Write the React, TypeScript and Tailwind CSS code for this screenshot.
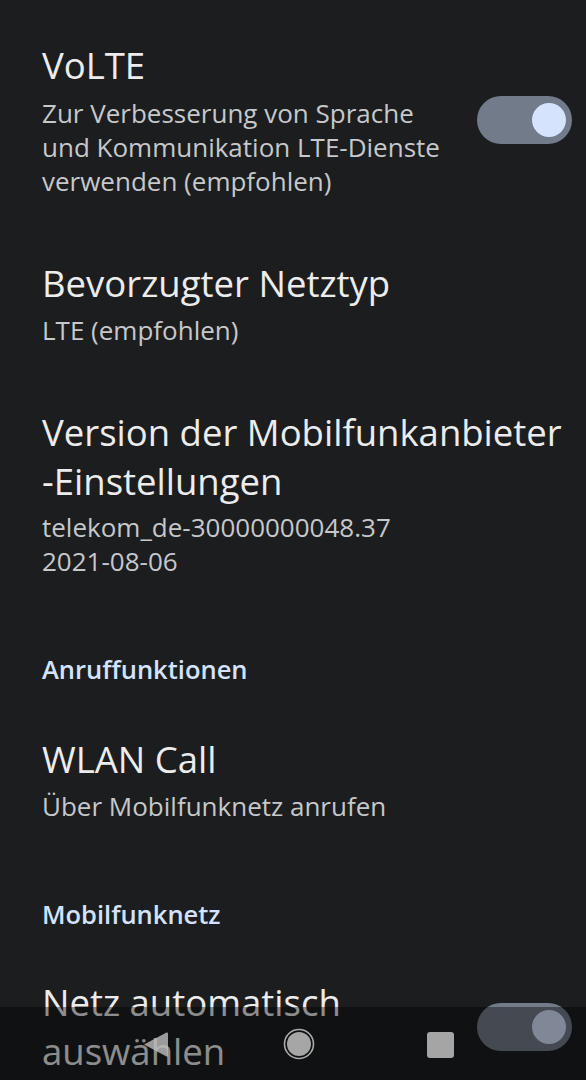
import React from 'react'

const Toggle: React.FC = () => (
  <div className="w-[95px] h-[48px] rounded-full bg-[#727b89] flex items-center justify-end pr-[6px] shrink-0">
    <div className="w-[34px] h-[34px] rounded-full bg-[#d6e3fc]" />
  </div>
)

const Title: React.FC<{ children: React.ReactNode }> = ({ children }) => (
  <div className="text-[36.5px] leading-[49px] text-[#ececec]">{children}</div>
)

const Sub: React.FC<{ children: React.ReactNode; className?: string }> = ({ children, className }) => (
  <div className={`text-[26px] leading-[34px] text-[#c6c8ca] ${className ?? ''}`}>{children}</div>
)

const Category: React.FC<{ children: React.ReactNode; className?: string }> = ({ children, className }) => (
  <div className={`text-[25.5px] leading-[34px] font-semibold text-[#d3e3fd] ${className ?? ''}`}>{children}</div>
)

export default function App() {
  return (
    <div
      className="relative h-[1080px] w-[586px] overflow-hidden bg-[#1c1d1f]"
      style={{ fontFamily: '"Open Sans", Roboto, sans-serif' }}
    >
      <div className="flex flex-col pl-[42px] pr-[14px] pt-[41px]">
        {/* VoLTE */}
        <div className="flex items-center gap-3">
          <div className="flex-1">
            <Title>VoLTE</Title>
            <Sub className="mt-[6px]">
              <div>Zur Verbesserung von Sprache</div>
              <div>und Kommunikation LTE-Dienste</div>
              <div>verwenden (empfohlen)</div>
            </Sub>
          </div>
          <Toggle />
        </div>

        {/* Netztyp */}
        <div className="mt-[61px]">
          <Title>Bevorzugter Netztyp</Title>
          <Sub className="mt-[5px]">LTE (empfohlen)</Sub>
        </div>

        {/* carrier config version */}
        <div className="mt-[61px]">
          <Title>
            <div>Version der Mobilfunkanbieter</div>
            <div>-Einstellungen</div>
          </Title>
          <Sub className="mt-[4px]">
            <div>telekom_de-30000000048.37</div>
            <div>2021-08-06</div>
          </Sub>
        </div>

        <Category className="mt-[74px]">Anruffunktionen</Category>

        <div className="mt-[49px]">
          <Title>WLAN Call</Title>
          <Sub className="mt-[5px]">Über Mobilfunknetz anrufen</Sub>
        </div>

        <Category className="mt-[74px]">Mobilfunknetz</Category>

        <div className="mt-[47px] flex items-center gap-3">
          <div className="flex-1">
            <Title>
              <div>Netz automatisch</div>
              <div>auswählen</div>
            </Title>
          </div>
          <Toggle />
        </div>
      </div>

      {/* navigation bar overlay */}
      <div className="absolute left-0 right-0 bottom-0 h-[73px] bg-black/40 flex items-center pl-[143px]">
        <svg width="26" height="27" viewBox="0 0 26 27" className="mt-[1px]">
          <path d="M1 13.5 L23.5 1.5 Q25 1 25 2.5 L25 24.5 Q25 26 23.5 25.5 Z" fill="rgba(190,190,190,0.8)" />
        </svg>
        <svg width="32" height="32" viewBox="0 0 32 32" className="ml-[114px]">
          <circle cx="16" cy="16" r="14.5" fill="none" stroke="#ababab" strokeWidth="1.6" />
          <circle cx="16" cy="16" r="12" fill="#a6a6a6" />
        </svg>
        <div className="w-[27px] h-[26px] rounded-[3px] bg-[#a5a5a5] mt-[2px] ml-[112px]" />
      </div>
    </div>
  )
}
